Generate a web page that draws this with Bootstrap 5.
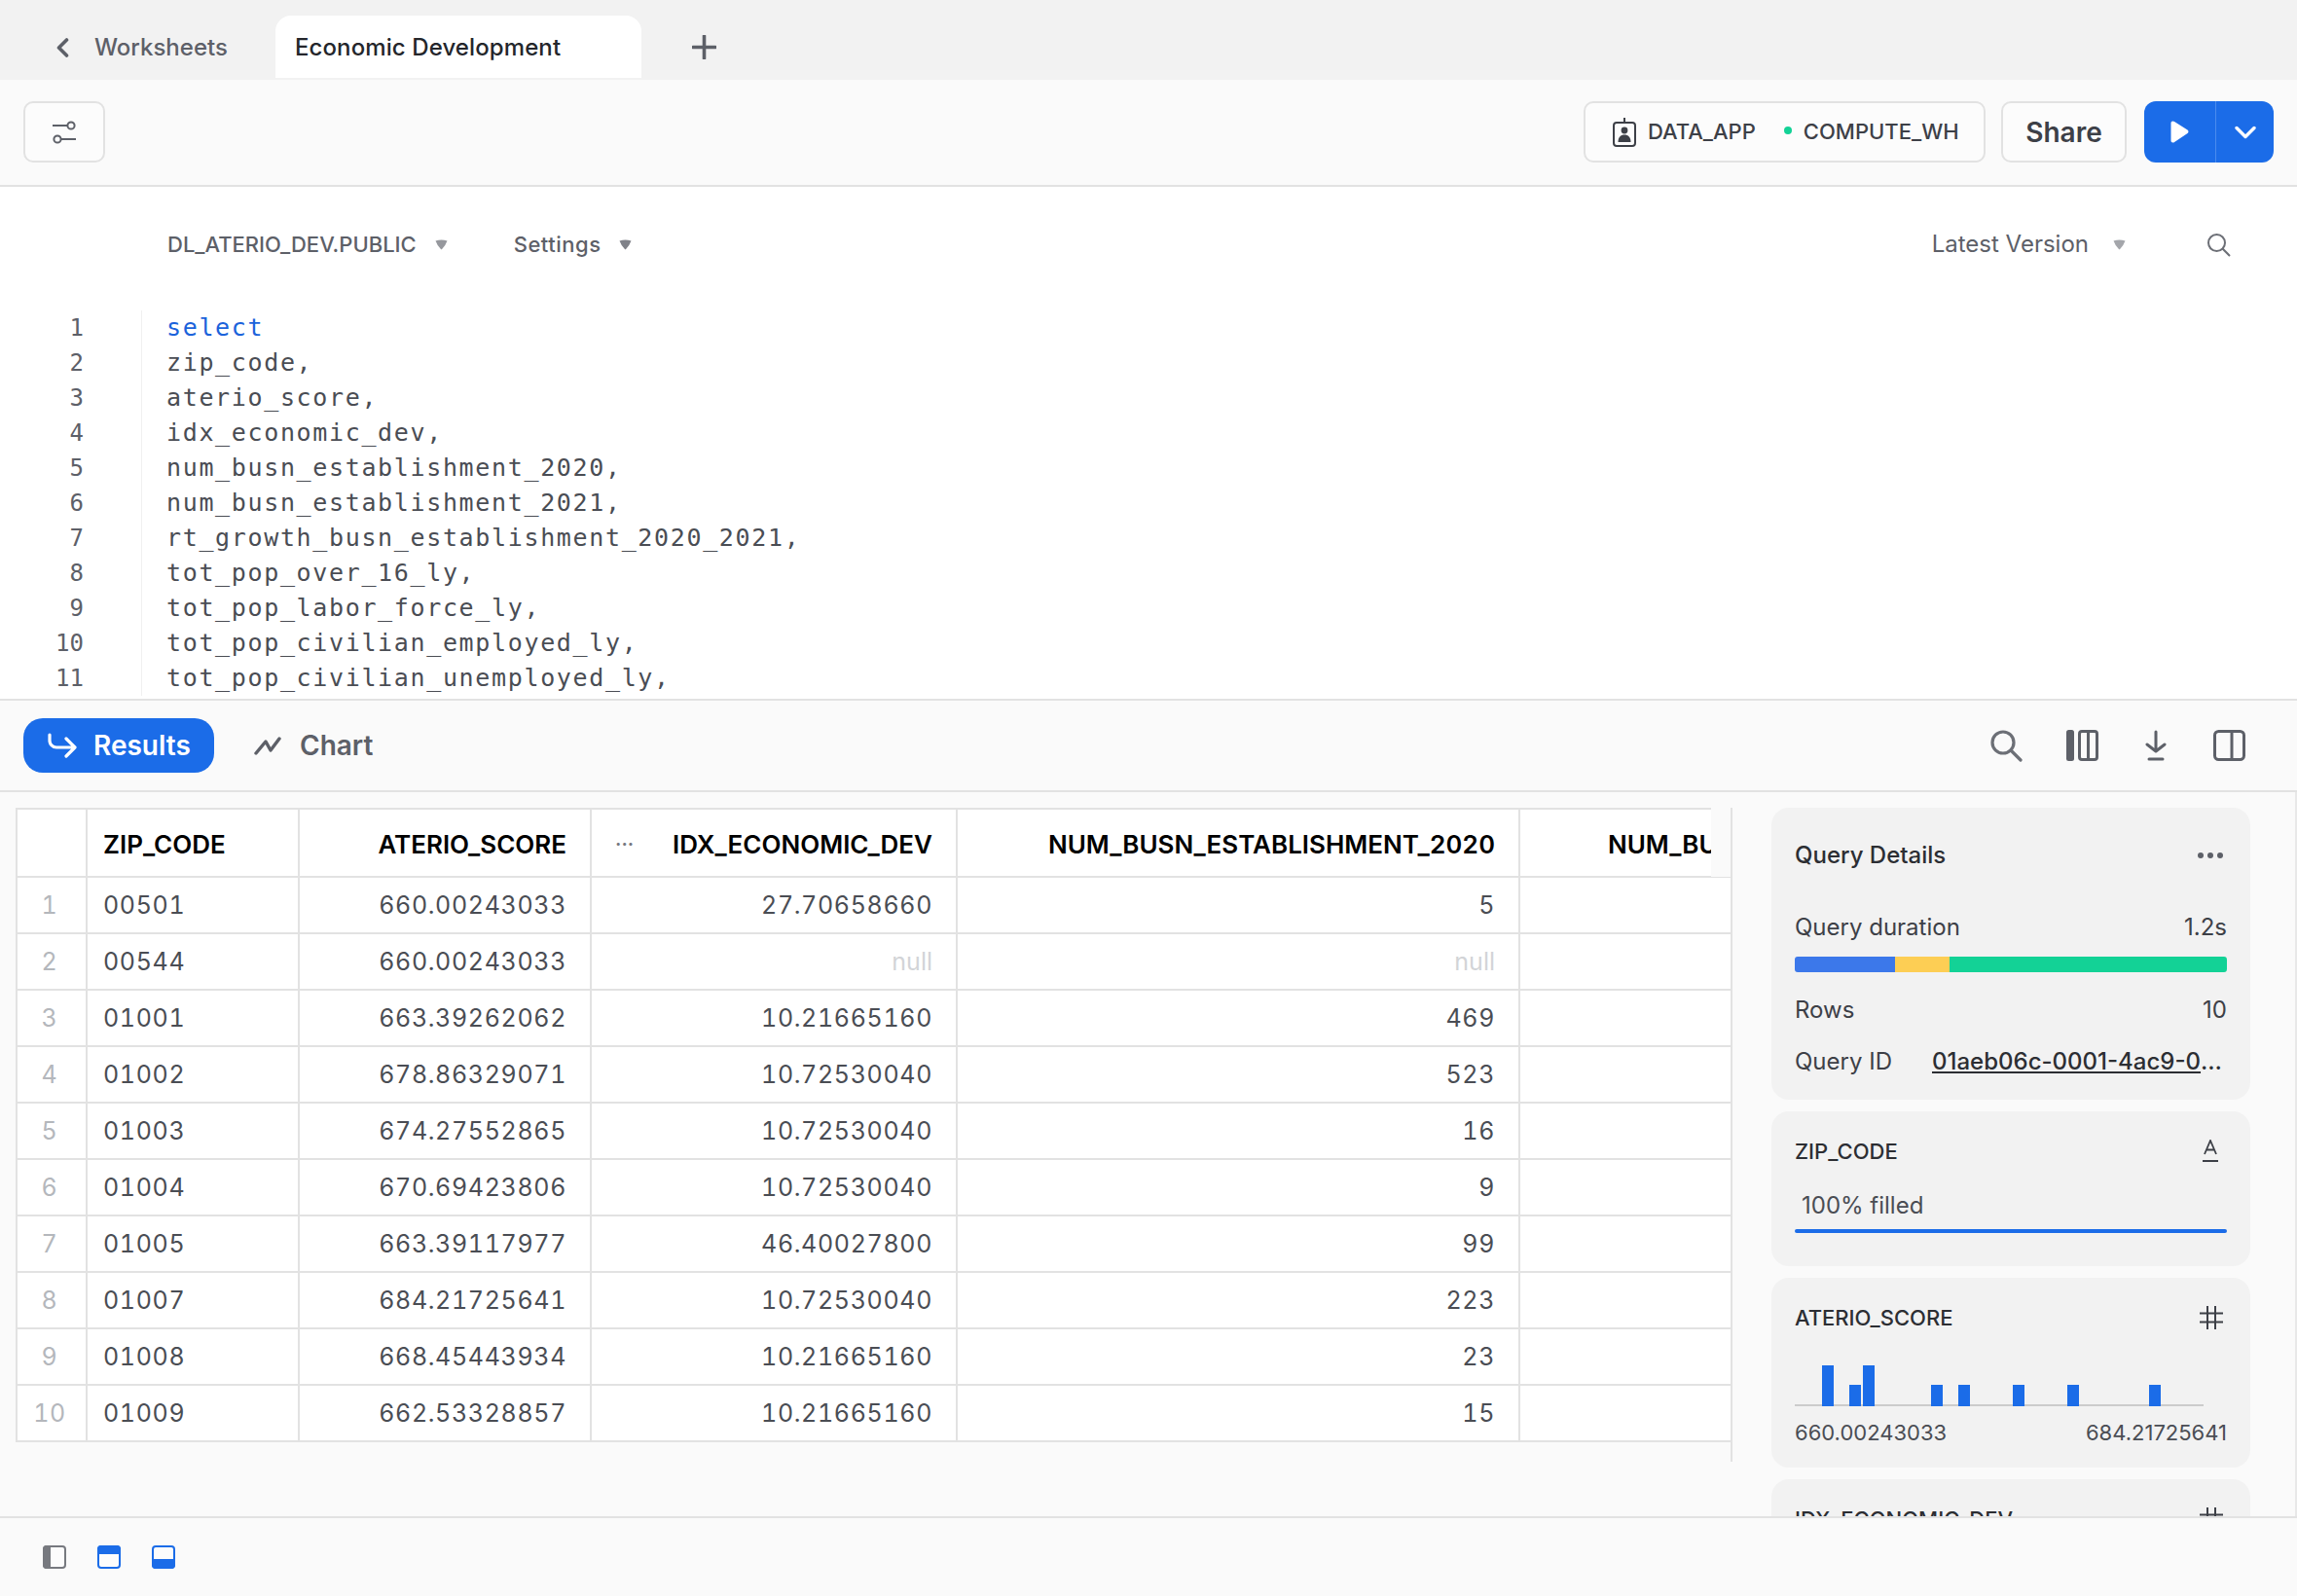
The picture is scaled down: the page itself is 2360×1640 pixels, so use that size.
<!DOCTYPE html>
<html>
<head>
    <meta charset="utf-8">
    <title>Economic Development</title>
    <link href="https://cdn.jsdelivr.net/npm/bootstrap@5.3.0/dist/css/bootstrap.min.css" rel="stylesheet">
    <style>
        html, body { height: 100%; }
        body {
            font-family: "Inter", "Liberation Sans", sans-serif;
            font-size: 24px;
            color: #3d4047;
            background: #fafafa;
        }
        .app-shell { height: 1640px; overflow: hidden; }

        .tab-bar { height: 82px; background: #f2f2f2; padding: 16px 0 2px 57px; }
        .back-link { color: #5d6068; font-weight: 500; gap: 26px; width: 226px; padding-top: 1px; }
        .sheet-tab {
            width: 376px; height: 64px; padding: 2px 20px 0;
            background: #fff; color: #24262b; font-weight: 500; letter-spacing: .1px;
            border-radius: 16px 16px 0 0;
        }
        .add-tab { margin-left: 52px; }

        .tool-bar { height: 110px; padding: 0 24px 1px; border-bottom: 2px solid #e2e2e2; background: #fafafa; }
        .ghost-btn {
            height: 63px; border: 2px solid #e2e2e2; border-radius: 10px; background: #fcfcfc;
            color: #3d4047;
        }
        .filter-btn { width: 84px; padding: 0; }
        .role-btn { width: 413px; padding: 0 0 0 28px; font-size: 22px; font-weight: 500; gap: 12px; }
        .role-dot { width: 8px; height: 8px; border-radius: 50%; background: #13d296; margin-left: 17px; position: relative; top: -2px; }
        .share-btn { width: 129px; margin: 0 18px 0 16px; padding: 0; font-size: 28px; font-weight: 600; }
        .run-btn { background: #1b6ce8; border: 0; height: 63px; padding: 0; border-radius: 12px; }
        .run-play { width: 75px; border-radius: 12px 0 0 12px; border-right: 2px solid #4a8bee; }
        .run-more { width: 59px; border-radius: 0 12px 12px 0; }

        .editor-pane { height: 528px; background: #fff; border-bottom: 2px solid #e2e2e2; overflow: hidden; }
        .editor-head { height: 118px; padding-left: 172px; padding-right: 68px; font-size: 22px; color: #5d6068; }
        .head-item { gap: 19px; margin-right: 68px; }
        .head-item.settings-item { letter-spacing: .5px; }
        .head-item.version { margin-right: 83px; gap: 25px; font-size: 24px; font-weight: 400; }
        .head-name { font-weight: 500; }
        .caret-mark { width: 13px; height: 11px; flex: none; }
        .code-rows { padding-top: 9px; font-family: "DejaVu Sans Mono", "Liberation Mono", monospace; font-size: 25px; line-height: 36px; letter-spacing: 1.65px; }
        .gutter-nums { width: 146px; padding-right: 59px; text-align: right; color: #5d6068; border-right: 1px solid #f0f0f0; letter-spacing: 0; font-size: 24px; }
        .code-text { padding-left: 25px; color: #4a4d54; white-space: pre; }
        .kw { color: #1b63db; }

        .results-bar { height: 94px; padding: 0 53px 0 24px; border-bottom: 2px solid #e2e2e2; flex: none; }
        .results-pill {
            width: 196px; height: 56px; padding: 0 0 0 25px; gap: 17px; border: 0; border-radius: 20px;
            background: #1b6ce8; color: #fff; font-size: 28px; font-weight: 600;
        }
        .results-pill:hover { background: #1b6ce8; color: #fff; }
        .chart-tab { margin-left: 41px; gap: 19px; color: #5d6068; font-size: 28px; font-weight: 600; }
        .bar-icons { gap: 48px; }
        .bar-icons .find-icon { margin-right: -3px; }

        .results-body { flex: 1; min-height: 0; overflow: hidden; }
        .table-zone { width: 1780px; flex: none; height: 672px; margin-top: 16px; padding-left: 16px; border-right: 2px solid #e2e2e2; position: relative; overflow: hidden; }
        .data-grid {
            table-layout: fixed; width: 2119px; margin: 0; background: #fff;
            border-collapse: collapse; border: 2px solid #e2e2e2;
            font-size: 25px; letter-spacing: .65px; font-variant-numeric: tabular-nums;
            --bs-table-bg: #fff;
        }
        .data-grid th, .data-grid td {
            padding: 2px 24px 0 16px; border: 2px solid #e2e2e2; vertical-align: middle;
            white-space: nowrap; box-shadow: none;
        }
        .data-grid th { height: 70px; color: #000; font-size: 26px; font-weight: 600; letter-spacing: 0; }
        .data-grid td { height: 58px; color: #4a4d54; font-weight: 400; }
        .data-grid td.row-num { padding: 2px 4px 0 0; text-align: center; color: #b4b7bc; }
        .data-grid td.null-val { color: #d2d4d7; letter-spacing: 0; }
        .sort-dots { color: #77797f; font-size: 20px; letter-spacing: 0; line-height: 1; margin-left: 8px; }
        .head-cover { position: absolute; top: 0; right: 0; width: 20px; height: 71px; background: #fafafa; }

        .side-panel { flex: 1; padding: 16px 46px 0 40px; display: flex; flex-direction: column; gap: 12px; overflow: hidden; border-right: 2px solid #e8e8e8; }
        .side-box { flex: none; background: #f2f2f2; border-radius: 18px; padding: 0 24px; font-size: 24px; line-height: 36px; }
        .box-query { height: 300px; padding-top: 31px; }
        .box-zip { height: 159px; padding-top: 23px; }
        .box-score { height: 195px; padding-top: 23px; }
        .box-title { color: #2c2e33; }
        .box-title.big { font-weight: 500; font-size: 24px; }
        .box-title.col-head { font-size: 22px; font-weight: 500; }
        .dur-line { margin-top: 38px; }
        .duration-bar { height: 16px; margin-top: 12px; border-radius: 3px; overflow: hidden; }
        .duration-bar span { display: block; }
        .seg-blue { background: #3c78ea; width: 103px; }
        .seg-yellow { background: #fdce54; width: 56px; }
        .seg-green { background: #13d296; flex: 1; }
        .rows-line { margin-top: 21px; }
        .id-line { margin-top: 17px; }
        .query-link { color: #2c2e33; font-weight: 500; text-decoration: underline; width: 303px; overflow: hidden; text-overflow: ellipsis; white-space: nowrap; }
        .fill-line { height: 4px; margin-top: 6px; background: #1b6ce8; border-radius: 2px; }
        .fill-label { margin-top: 20px; padding-left: 7px; color: #4a4d54; }
        .hist-bars {
            display: grid; grid-template-columns: repeat(30, 14px); align-items: end;
            height: 44px; width: 420px; margin-top: 29px; border-bottom: 2px solid #ccc;
        }
        .hist-bars span { width: 12px; background: #1b6ce8; margin-bottom: -2px; }
        .hist-labels { margin-top: 9px; font-size: 22px; color: #4a4d54; }
        .type-icon { margin-right: 4px; }
        .type-icon.wide { margin-right: 8px; }

        .foot-bar { height: 82px; flex: none; padding-left: 44px; border-top: 2px solid #e2e2e2; gap: 32px; background: #fafafa; position: relative; }
    </style>
</head>
<body>
<div class="app-shell d-flex flex-column">

    <div class="tab-bar d-flex flex-none">
        <div class="back-link d-flex align-items-center">
            <svg width="14" height="20" viewBox="0 0 14 20"><path d="M11.5 2 3.5 10l8 8" fill="none" stroke="#5d6068" stroke-width="3.6" stroke-linecap="round" stroke-linejoin="round"/></svg>
            <span>Worksheets</span>
        </div>
        <div class="sheet-tab d-flex align-items-center">Economic Development</div>
        <div class="add-tab d-flex align-items-center">
            <svg width="25" height="25" viewBox="0 0 25 25"><path d="M12.500 1v23M1 12.500h23" stroke="#5d6068" stroke-width="3.600" stroke-linecap="round"/></svg>
        </div>
    </div>

    <div class="tool-bar d-flex align-items-center justify-content-between flex-none">
        <button class="btn ghost-btn filter-btn d-flex align-items-center justify-content-center" type="button" aria-label="Filters">
            <svg width="26" height="24" viewBox="0 0 26 24" fill="none" stroke="#5d6068" stroke-width="2"><path d="M1 5h15M10 19h15"/><circle cx="20" cy="5" r="3.600"/><circle cx="6" cy="19" r="3.600"/></svg>
        </button>
        <div class="d-flex align-items-center">
            <button class="btn ghost-btn role-btn d-flex align-items-center" type="button">
                <svg width="24" height="30" viewBox="0 0 24 30"><rect x="1" y="5" width="22" height="24" rx="3" fill="none" stroke="#3d4047" stroke-width="2"/><path d="M12 0v5" stroke="#3d4047" stroke-width="2"/><circle cx="12" cy="13" r="3.400" fill="#3d4047"/><path d="M5.500 25c0-5 2.500-7.500 6.500-7.500s6.500 2.500 6.500 7.500z" fill="#3d4047"/></svg>
                <span>DATA_APP</span>
                <span class="role-dot"></span>
                <span>COMPUTE_WH</span>
            </button>
            <button class="btn ghost-btn share-btn" type="button">Share</button>
            <div class="btn-group">
                <button class="btn run-btn run-play d-flex align-items-center justify-content-center" type="button" aria-label="Run">
                    <svg width="19" height="23" viewBox="0 0 19 23"><path d="M2.500 0.500c-1.300 0-2 .9-2 2v18c0 1.200.7 2 2 2 .6 0 1.100-.2 1.600-.6L17.500 13c1.300-.9 1.300-2.600 0-3.500L4.100 1.100C3.600.7 3.100.5 2.500.5z" fill="#fff"/></svg>
                </button>
                <button class="btn run-btn run-more d-flex align-items-center justify-content-center" type="button" aria-label="More">
                    <svg width="22" height="14" viewBox="0 0 22 14"><path d="M2 2.500 11 11.500 20 2.500" fill="none" stroke="#fff" stroke-width="3.400" stroke-linecap="round" stroke-linejoin="round"/></svg>
                </button>
            </div>
        </div>
    </div>

    <div class="editor-pane flex-none">
        <div class="editor-head d-flex align-items-center">
            <div class="head-item head-name d-flex align-items-center">DL_ATERIO_DEV.PUBLIC
                <svg class="caret-mark" viewBox="0 0 13 11"><path d="M.5 1.500Q6.500-.5 12.500 1.500 10.500 7 6.500 10.500 2.500 7 .5 1.500z" fill="#96989d"/></svg>
            </div>
            <div class="head-item settings-item head-name d-flex align-items-center">Settings
                <svg class="caret-mark" viewBox="0 0 13 11"><path d="M.5 1.500Q6.500-.5 12.500 1.500 10.500 7 6.500 10.500 2.500 7 .5 1.500z" fill="#808289"/></svg>
            </div>
            <div class="head-item version ms-auto d-flex align-items-center">Latest Version
                <svg class="caret-mark" viewBox="0 0 13 11"><path d="M.5 1.500Q6.500-.5 12.500 1.500 10.500 7 6.500 10.500 2.500 7 .5 1.500z" fill="#a4a6ab"/></svg>
            </div>
            <svg width="25" height="25" viewBox="0 0 25 25" fill="none" stroke="#6c6f76" stroke-width="2"><circle cx="10.500" cy="10.500" r="8.500"/><path d="M16.500 16.500 24 24"/></svg>
        </div>
        <div class="code-rows d-flex">
            <div class="gutter-nums">1<br>2<br>3<br>4<br>5<br>6<br>7<br>8<br>9<br>10<br>11</div>
            <div class="code-text"><span class="kw">select</span>
zip_code,
aterio_score,
idx_economic_dev,
num_busn_establishment_2020,
num_busn_establishment_2021,
rt_growth_busn_establishment_2020_2021,
tot_pop_over_16_ly,
tot_pop_labor_force_ly,
tot_pop_civilian_employed_ly,
tot_pop_civilian_unemployed_ly,</div>
        </div>
    </div>

    <div class="results-bar d-flex align-items-center">
        <button class="btn results-pill d-flex align-items-center" type="button">
            <svg width="30" height="26" viewBox="0 0 30 26" fill="none" stroke="#fff" stroke-width="3.200" stroke-linecap="round" stroke-linejoin="round"><path d="M2 2v6a7 7 0 0 0 7 7h18M19 6l9 9-9 9"/></svg>
            <span>Results</span>
        </button>
        <div class="chart-tab d-flex align-items-center">
            <svg width="28" height="20" viewBox="0 0 28 20" fill="none" stroke="#5d6068" stroke-width="3.400" stroke-linecap="round" stroke-linejoin="round"><path d="M2 18 12 6l5 9L26 3"/></svg>
            <span>Chart</span>
        </div>
        <div class="bar-icons d-flex align-items-center ms-auto">
            <svg class="find-icon" width="33" height="33" viewBox="0 0 33 33" fill="none" stroke="#6c6f76" stroke-width="3.200" stroke-linecap="round"><circle cx="13" cy="13" r="11"/><path d="M21 21l10 10"/></svg>
            <svg width="33" height="32" viewBox="0 0 33 32" fill="none" stroke="#5d6068" stroke-width="3"><rect x="0" y="0" width="8" height="32" rx="2.500" fill="#5d6068" stroke="none"/><rect x="13.500" y="1.500" width="18" height="29" rx="2.500"/><path d="M22.500 1.500v29"/></svg>
            <svg width="22" height="32" viewBox="0 0 22 32" fill="none" stroke="#5d6068" stroke-width="3" stroke-linecap="round" stroke-linejoin="round"><path d="M11 2v19M2 15l9 7 9-7M4 30h14"/></svg>
            <svg width="33" height="32" viewBox="0 0 33 32" fill="none" stroke="#5d6068" stroke-width="3"><rect x="1.500" y="1.500" width="30" height="29" rx="4"/><path d="M19 1.500v29"/></svg>
        </div>
    </div>

    <div class="results-body d-flex">
        <div class="table-zone">
            <table class="table data-grid">
                <colgroup><col style="width:72px"><col style="width:218px"><col style="width:300px"><col style="width:376px"><col style="width:578px"><col style="width:575px"></colgroup>
                <thead>
                    <tr>
                        <th></th>
                        <th>ZIP_CODE</th>
                        <th class="text-end">ATERIO_SCORE</th>
                        <th><div class="d-flex align-items-center justify-content-between"><span class="sort-dots">···</span><span>IDX_ECONOMIC_DEV</span></div></th>
                        <th class="text-end">NUM_BUSN_ESTABLISHMENT_2020</th>
                        <th class="text-end">NUM_BUSN_ESTABLISHMENT_2021</th>
                    </tr>
                </thead>
                <tbody>
                    <tr><td class="row-num">1</td><td>00501</td><td class="text-end">660.00243033</td><td class="text-end">27.70658660</td><td class="text-end">5</td><td></td></tr>
                    <tr><td class="row-num">2</td><td>00544</td><td class="text-end">660.00243033</td><td class="text-end null-val">null</td><td class="text-end null-val">null</td><td></td></tr>
                    <tr><td class="row-num">3</td><td>01001</td><td class="text-end">663.39262062</td><td class="text-end">10.21665160</td><td class="text-end">469</td><td></td></tr>
                    <tr><td class="row-num">4</td><td>01002</td><td class="text-end">678.86329071</td><td class="text-end">10.72530040</td><td class="text-end">523</td><td></td></tr>
                    <tr><td class="row-num">5</td><td>01003</td><td class="text-end">674.27552865</td><td class="text-end">10.72530040</td><td class="text-end">16</td><td></td></tr>
                    <tr><td class="row-num">6</td><td>01004</td><td class="text-end">670.69423806</td><td class="text-end">10.72530040</td><td class="text-end">9</td><td></td></tr>
                    <tr><td class="row-num">7</td><td>01005</td><td class="text-end">663.39117977</td><td class="text-end">46.40027800</td><td class="text-end">99</td><td></td></tr>
                    <tr><td class="row-num">8</td><td>01007</td><td class="text-end">684.21725641</td><td class="text-end">10.72530040</td><td class="text-end">223</td><td></td></tr>
                    <tr><td class="row-num">9</td><td>01008</td><td class="text-end">668.45443934</td><td class="text-end">10.21665160</td><td class="text-end">23</td><td></td></tr>
                    <tr><td class="row-num">10</td><td>01009</td><td class="text-end">662.53328857</td><td class="text-end">10.21665160</td><td class="text-end">15</td><td></td></tr>
                </tbody>
            </table>
            <div class="head-cover"></div>
        </div>

        <div class="side-panel">
            <div class="side-box box-query">
                <div class="d-flex justify-content-between align-items-center box-title big">
                    <span>Query Details</span>
                    <svg class="type-icon" width="26" height="6" viewBox="0 0 26 6" fill="#5d6068"><circle cx="3" cy="3" r="3"/><circle cx="13" cy="3" r="3"/><circle cx="23" cy="3" r="3"/></svg>
                </div>
                <div class="d-flex justify-content-between dur-line"><span>Query duration</span><span>1.2s</span></div>
                <div class="duration-bar d-flex"><span class="seg-blue"></span><span class="seg-yellow"></span><span class="seg-green"></span></div>
                <div class="d-flex justify-content-between rows-line"><span>Rows</span><span>10</span></div>
                <div class="d-flex justify-content-between id-line"><span>Query ID</span><span class="query-link">01aeb06c-0001-4ac9-0000-18f2</span></div>
            </div>
            <div class="side-box box-zip">
                <div class="d-flex justify-content-between align-items-center box-title col-head">
                    <span>ZIP_CODE</span>
                    <svg class="type-icon wide" width="18" height="24" viewBox="0 0 18 24" fill="none" stroke="#3d4047" stroke-width="1.800"><path d="M3 15 9 1l6 14M5 10.500h8M1 22h16"/></svg>
                </div>
                <div class="fill-label">100% filled</div>
                <div class="fill-line"></div>
            </div>
            <div class="side-box box-score">
                <div class="d-flex justify-content-between align-items-center box-title col-head">
                    <span>ATERIO_SCORE</span>
                    <svg class="type-icon" width="24" height="24" viewBox="0 0 24 24" fill="none" stroke="#3d4047" stroke-width="2"><path d="M8 0v24M16 0v24M0 7.500h24M0 16.500h24"/></svg>
                </div>
                <div class="hist-bars">
                    <span style="grid-column:3;height:42px"></span>
                    <span style="grid-column:5;height:22px"></span>
                    <span style="grid-column:6;height:42px"></span>
                    <span style="grid-column:11;height:22px"></span>
                    <span style="grid-column:13;height:22px"></span>
                    <span style="grid-column:17;height:22px"></span>
                    <span style="grid-column:21;height:22px"></span>
                    <span style="grid-column:27;height:22px"></span>
                </div>
                <div class="d-flex justify-content-between hist-labels"><span>660.00243033</span><span>684.21725641</span></div>
            </div>
            <div class="side-box box-score">
                <div class="d-flex justify-content-between align-items-center box-title col-head">
                    <span>IDX_ECONOMIC_DEV</span>
                    <svg class="type-icon" width="24" height="24" viewBox="0 0 24 24" fill="none" stroke="#3d4047" stroke-width="2"><path d="M8 0v24M16 0v24M0 7.500h24M0 16.500h24"/></svg>
                </div>
            </div>
        </div>
    </div>

    <div class="foot-bar d-flex align-items-center">
        <svg width="24" height="24" viewBox="0 0 24 24"><rect x="1" y="1" width="22" height="22" rx="3" fill="#fcfcfc" stroke="#77797f" stroke-width="2"/><path d="M4 0h4v24H4a4 4 0 0 1-4-4V4a4 4 0 0 1 4-4z" fill="#77797f"/></svg>
        <svg width="24" height="24" viewBox="0 0 24 24"><rect x="1" y="1" width="22" height="22" rx="3" fill="#fcfcfc" stroke="#1b6ce8" stroke-width="2"/><path d="M0 9V4a4 4 0 0 1 4-4h16a4 4 0 0 1 4 4v5z" fill="#1b6ce8"/></svg>
        <svg width="24" height="24" viewBox="0 0 24 24"><rect x="1" y="1" width="22" height="22" rx="3" fill="#fcfcfc" stroke="#1b6ce8" stroke-width="2"/><path d="M0 14v6a4 4 0 0 0 4 4h16a4 4 0 0 0 4-4v-6z" fill="#1b6ce8"/></svg>
    </div>
</div>
<script src="https://cdn.jsdelivr.net/npm/bootstrap@5.3.0/dist/js/bootstrap.bundle.min.js"></script>
</body>
</html>
